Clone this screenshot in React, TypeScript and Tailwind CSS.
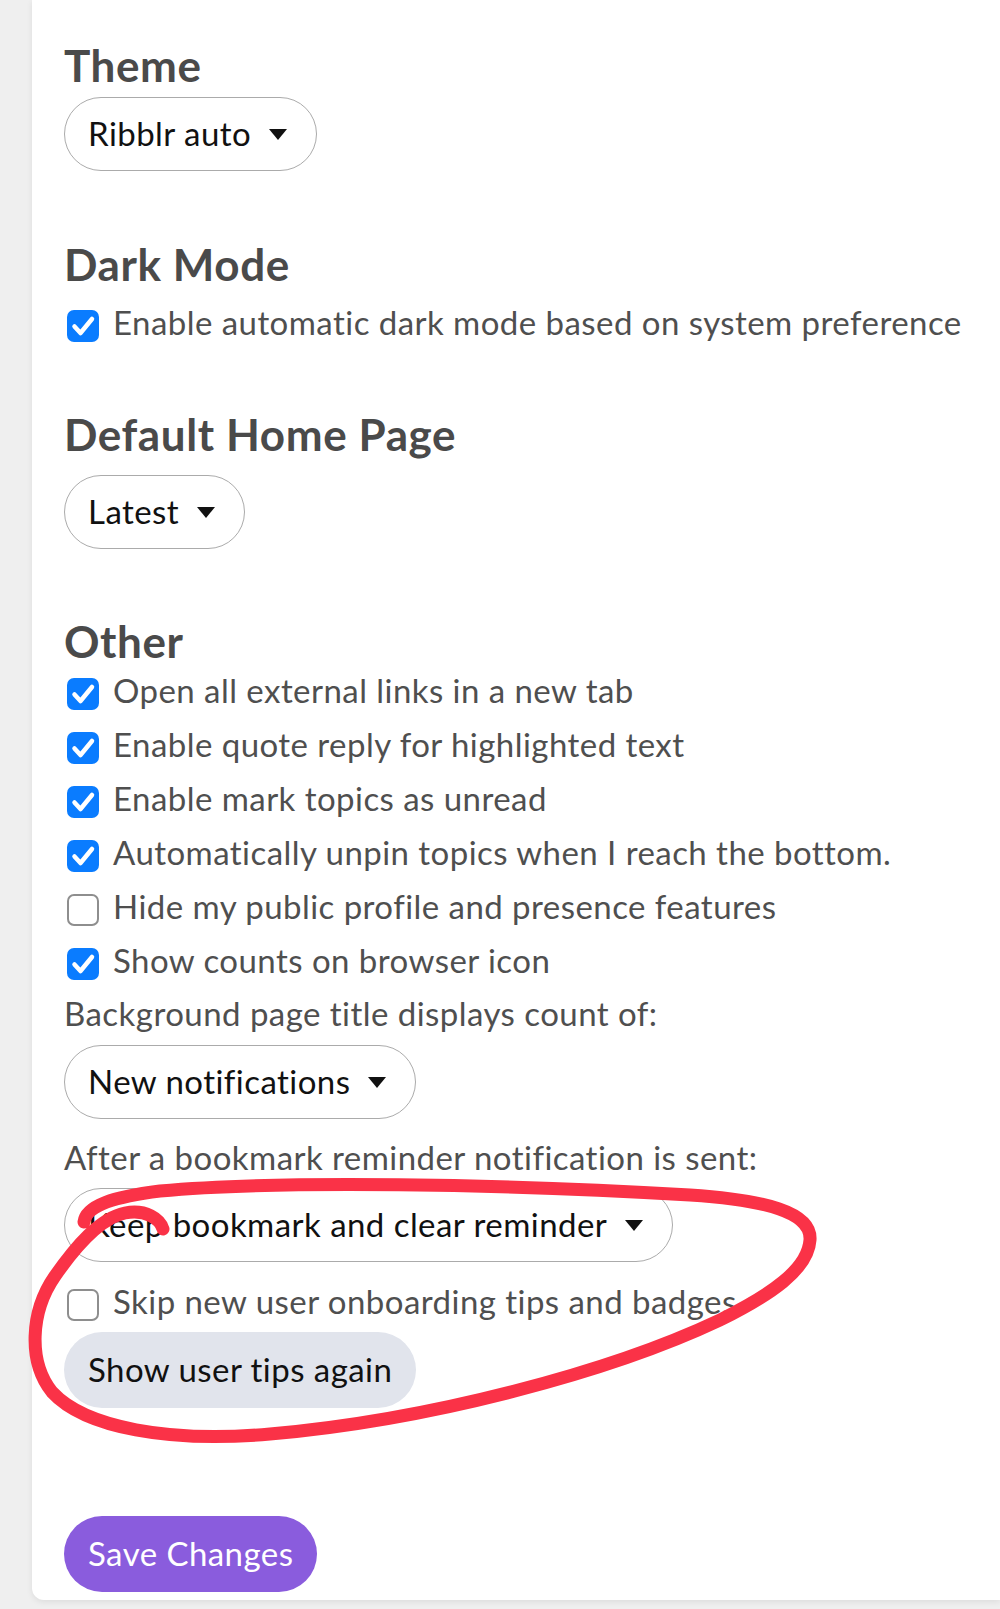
import React from 'react';

function Checkbox({ checked }: { checked: boolean }) {
  if (!checked) {
    return <span className="mt-[15px] ml-[3px] size-8 shrink-0 rounded-[7px] border-2 border-[#8e8e8e] bg-white" />;
  }
  return (
    <span className="mt-[15px] ml-[3px] flex size-8 shrink-0 items-center justify-center rounded-[7px] bg-[#0a7cff]">
      <svg viewBox="0 0 32 32" className="size-8">
        <path d="M7.5 16.5 13.5 23 25 9" fill="none" stroke="#fff" strokeWidth="4.5" strokeLinecap="round" strokeLinejoin="round" />
      </svg>
    </span>
  );
}

function CheckRow({ label, checked, className = '' }: { label: string; checked: boolean; className?: string }) {
  return (
    <div className={`flex h-[54px] items-start ${className}`}>
      <Checkbox checked={checked} />
      <span className="ml-[14px] whitespace-nowrap text-[33px] leading-[54px] tracking-[0.45px] text-[#4f4f4f]">{label}</span>
    </div>
  );
}

function Select({ value, className = '' }: { value: string; className?: string }) {
  return (
    <button
      type="button"
      className={`flex h-[74px] w-fit items-center rounded-full border-[1.5px] border-[#ababab] bg-white pl-[23px] pr-[29px] text-[33px] tracking-[0.45px] text-[#111] ${className}`}
    >
      <span className="whitespace-nowrap">{value}</span>
      <svg viewBox="0 0 18 11" className="ml-[18px] h-[11px] w-[18px]">
        <path d="M0 0h18L9 11z" fill="#111" />
      </svg>
    </button>
  );
}

function Heading({ children, className = '' }: { children: React.ReactNode; className?: string }) {
  return <h2 className={`text-[44px] font-bold leading-[44px] tracking-[0.6px] text-[#4a4a4a] ${className}`}>{children}</h2>;
}

const otherOptions = [
  { label: 'Open all external links in a new tab', checked: true },
  { label: 'Enable quote reply for highlighted text', checked: true },
  { label: 'Enable mark topics as unread', checked: true },
  { label: 'Automatically unpin topics when I reach the bottom.', checked: true },
  { label: 'Hide my public profile and presence features', checked: false },
  { label: 'Show counts on browser icon', checked: true },
];

export default function App() {
  return (
    <div className="relative min-h-[1609px] overflow-hidden bg-[#efefef] font-['Lato',sans-serif]">
      <div className="ml-8 rounded-bl-[12px] bg-white pb-2 pl-8 pt-[43px] shadow-[0_2px_6px_rgba(0,0,0,0.08)]">
        <Heading>Theme</Heading>
        <Select value="Ribblr auto" className="mt-[10px]" />

        <Heading className="mt-[71px]">Dark Mode</Heading>
        <CheckRow className="mt-[9px]" label="Enable automatic dark mode based on system preference" checked />

        <Heading className="mt-[63px]">Default Home Page</Heading>
        <Select value="Latest" className="mt-[19px]" />

        <Heading className="mt-[70px]">Other</Heading>
        {otherOptions.map((o) => (
          <CheckRow key={o.label} label={o.label} checked={o.checked} />
        ))}

        <p className="-mt-[1px] text-[33px] leading-[54px] tracking-[0.45px] text-[#4f4f4f]">Background page title displays count of:</p>
        <Select value="New notifications" className="mt-[5px]" />

        <p className="mt-[11px] text-[33px] leading-[54px] tracking-[0.45px] text-[#4f4f4f]">After a bookmark reminder notification is sent:</p>
        <Select value="Keep bookmark and clear reminder" className="mt-[4px]" />

        <CheckRow className="mt-[12px]" label="Skip new user onboarding tips and badges" checked={false} />
        <button type="button" className="mt-[4px] flex h-[76px] items-center rounded-full bg-[#e1e4ec] px-6 text-[33px] tracking-[0.45px] text-[#111]">
          Show user tips again
        </button>

        <button type="button" className="mt-[108px] flex h-[76px] items-center rounded-full bg-[#8a5cdd] px-6 text-[33px] tracking-[0.45px] text-white">
          Save Changes
        </button>
      </div>

      {/* hand-drawn annotation */}
      <svg className="pointer-events-none absolute left-0 top-0 h-[1609px] w-[1000px]" viewBox="0 0 1000 1609">
        <path
          d="M84 1222 C86 1206 112 1197 160 1191 C280 1180 500 1184 690 1195 C765 1200 812 1212 810 1240 C808 1270 770 1295 720 1320 C610 1372 430 1420 270 1434 C170 1443 85 1428 52 1392 C28 1362 30 1312 55 1276 C76 1246 100 1218 125 1213 C146 1209 160 1219 163 1229"
          fill="none"
          stroke="#fa3247"
          strokeWidth="13"
          strokeLinecap="round"
          strokeLinejoin="round"
        />
      </svg>
    </div>
  );
}
